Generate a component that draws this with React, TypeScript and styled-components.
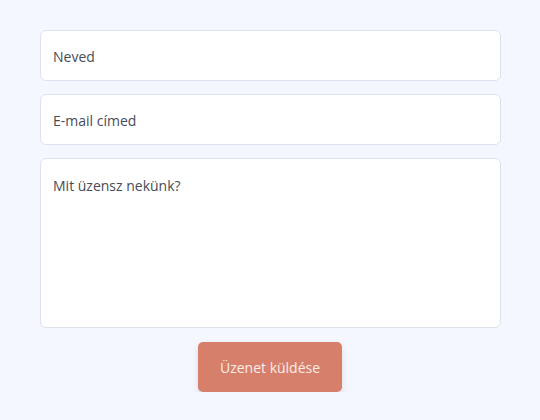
import React from "react";
import styled, { createGlobalStyle } from "styled-components";

const Global = createGlobalStyle`
  html, body { margin: 0; padding: 0; background: #f5f7fe; }
  body { font-family: "Open Sans", "Noto Sans", sans-serif; }
  * { box-sizing: border-box; }
`;

const Form = styled.form`
  width: 461px;
  margin: 0 auto;
  padding-top: 30px;
  display: flex;
  flex-direction: column;
  gap: 13px;
`;

const field = `
  width: 100%;
  background: #ffffff;
  border: 1.5px solid #dce2f0;
  border-radius: 6px;
  font-family: "Open Sans", "Noto Sans", sans-serif;
  font-size: 14px;
  color: #474c57;
  outline: none;
  padding: 1px 12.5px 0;
  &::placeholder { color: #474c57; opacity: 1; }
`;

const Input = styled.input`
  ${field}
  height: 51px;
`;

const TextArea = styled.textarea`
  ${field}
  height: 170px;
  padding-top: 17px;
  resize: none;
`;

const Actions = styled.div`
  display: flex;
  justify-content: center;
  padding-top: 1px;
`;

const Button = styled.button`
  width: 144px;
  height: 50px;
  border: none;
  border-radius: 5px;
  background: #d67f6b;
  color: #fbeee9;
  font-family: "Open Sans", "Noto Sans", sans-serif;
  font-size: 14px;
  box-shadow: 0 3px 6px rgba(120, 110, 110, 0.18);
  cursor: pointer;
`;

export default function App() {
  return (
    <>
      <Global />
      <Form onSubmit={(e) => e.preventDefault()}>
        <Input placeholder="Neved" />
        <Input placeholder="E-mail címed" />
        <TextArea placeholder="Mit üzensz nekünk?" />
        <Actions>
          <Button type="submit">Üzenet küldése</Button>
        </Actions>
      </Form>
    </>
  );
}
